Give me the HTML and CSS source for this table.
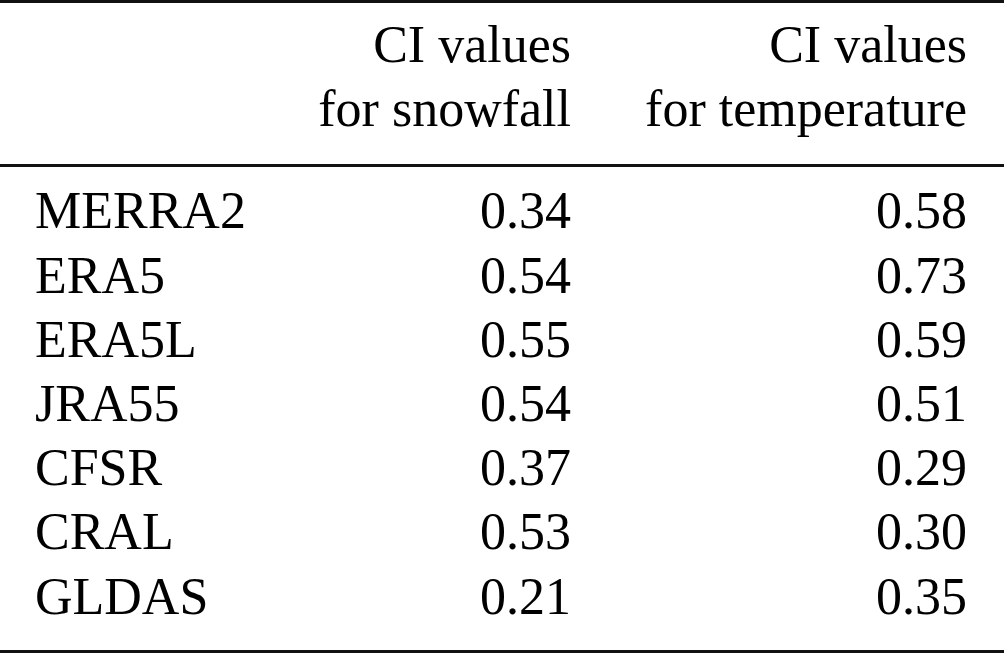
FILE: index.html
```html
<!DOCTYPE html>
<html>
<head>
<meta charset="utf-8">
<link rel="stylesheet" href="styles.css">
</head>
<body>
<div class="table">
  <div class="head grid">
    <div class="c1"></div>
    <div class="num">CI values<br>for snowfall</div>
    <div class="num">CI values<br>for temperature</div>
  </div>
  <div class="body grid">
    <div class="c1">MERRA2</div><div class="num">0.34</div><div class="num">0.58</div>
    <div class="c1">ERA5</div><div class="num">0.54</div><div class="num">0.73</div>
    <div class="c1">ERA5L</div><div class="num">0.55</div><div class="num">0.59</div>
    <div class="c1">JRA55</div><div class="num">0.54</div><div class="num">0.51</div>
    <div class="c1">CFSR</div><div class="num">0.37</div><div class="num">0.29</div>
    <div class="c1">CRAL</div><div class="num">0.53</div><div class="num">0.30</div>
    <div class="c1">GLDAS</div><div class="num">0.21</div><div class="num">0.35</div>
  </div>
</div>
</body>
</html>
```
FILE: styles.css
```css
html, body {
  margin: 0;
  padding: 0;
  background: #fff;
}
body {
  width: 1004px;
  height: 653px;
  overflow: hidden;
  font-family: "Liberation Serif", "Times New Roman", serif;
  font-size: 52px;
  line-height: 64.2px;
  color: #000;
}
.table {
  border-top: 3px solid #111;
  border-bottom: 3px solid #111;
}
.grid {
  display: grid;
  grid-template-columns: 1fr 300px 396px;
  padding-left: 35px;
  padding-right: 37px;
}
.head {
  padding-top: 10px;
  padding-bottom: 22.6px;
  border-bottom: 3px solid #111;
}
.body {
  padding-top: 12.4px;
  padding-bottom: 21.2px;
}
.num {
  text-align: right;
  white-space: nowrap;
}
.c1 {
  white-space: nowrap;
}
```
